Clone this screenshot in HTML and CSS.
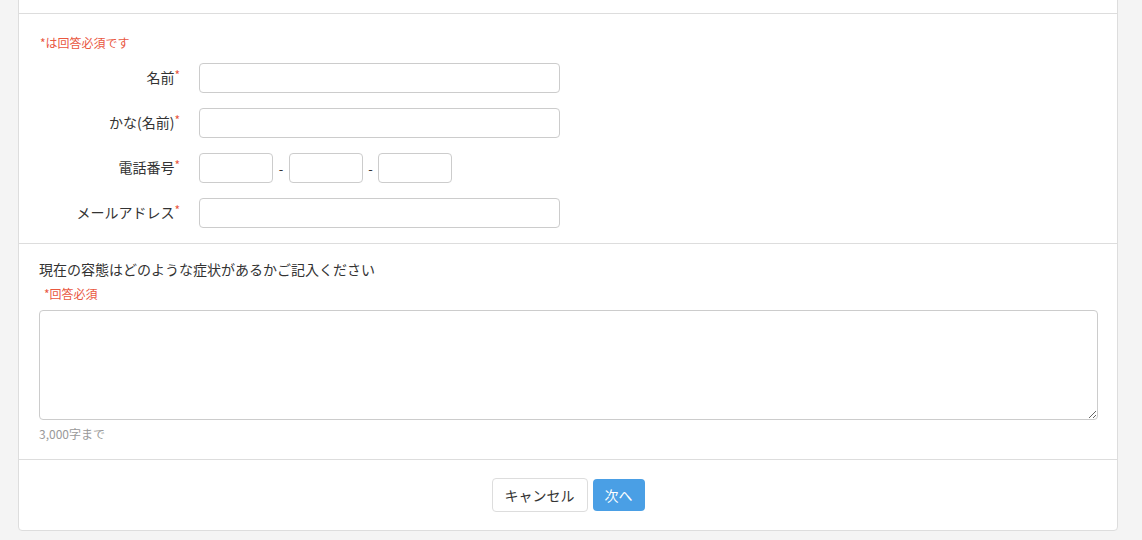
FILE: index.html
```html
<!DOCTYPE html>
<html lang="ja">

<head>
    <meta charset="UTF-8">
    <meta name="viewport" content="width=device-width, initial-scale=1.0">
    <title>お問い合わせ</title>
    <link rel="stylesheet" href="styles.css">
</head>

<body>
    <div class="card">
        <div class="card-head"></div>

        <!-- 基本情報 -->
        <div class="section info">
            <p class="note"><span class="req">*</span>は回答必須です</p>
            <div class="row">
                <label class="label">名前<span class="req">*</span></label>
                <input class="input" type="text">
            </div>
            <div class="row">
                <label class="label">かな(名前)<span class="req">*</span></label>
                <input class="input" type="text">
            </div>
            <div class="row">
                <label class="label">電話番号<span class="req">*</span></label>
                <div class="tel">
                    <input class="input short" type="text">
                    <span class="dash">-</span>
                    <input class="input short" type="text">
                    <span class="dash">-</span>
                    <input class="input short" type="text">
                </div>
            </div>
            <div class="row">
                <label class="label">メールアドレス<span class="req">*</span></label>
                <input class="input" type="email">
            </div>
        </div>

        <!-- 症状 -->
        <div class="section question">
            <p class="q-title">現在の容態はどのような症状があるかご記入ください</p>
            <p class="q-req">*回答必須</p>
            <textarea class="area" maxlength="3000"></textarea>
            <p class="limit">3,000字まで</p>
        </div>

        <div class="footer">
            <button class="btn btn-cancel">キャンセル</button>
            <button class="btn btn-next">次へ</button>
        </div>
    </div>
</body>

</html>
```

FILE: styles.css
```css
* {
    box-sizing: border-box;
}

body {
    margin: 0;
    background: #f4f4f4;
    font-family: "Noto Sans CJK JP", "Noto Sans", sans-serif;
    font-size: 14px;
    color: #333;
}

p {
    margin: 0;
}

.card {
    margin: -20px 24px 8px 18px;
    background: #fff;
    border: 1px solid #ddd;
    border-radius: 4px;
}

.card-head {
    height: 33px;
    border-bottom: 1px solid #ddd;
}

.section {
    border-bottom: 1px solid #ddd;
}

.req {
    color: #e9573f;
}

/* 基本情報 */
.info {
    padding: 20px 20px 15px 21px;
}

.info .note {
    color: #e9573f;
    font-size: 12px;
    line-height: 18px;
    margin-bottom: 11px;
}

.row {
    display: flex;
    align-items: center;
    height: 30px;
    margin-bottom: 15px;
}

.row:last-child {
    margin-bottom: 0;
}

.label {
    width: 140px;
    margin-right: 19px;
    padding-bottom: 3px;
    text-align: right;
    line-height: 20px;
}

.label .req {
    font-size: 12px;
    vertical-align: top;
    position: relative;
    top: -2px;
}

.input {
    width: 361px;
    height: 30px;
    border: 1px solid #ccc;
    border-radius: 4px;
    padding: 4px 8px;
    font: inherit;
    outline: none;
}

.tel {
    display: flex;
    align-items: center;
}

.input.short {
    width: 74px;
}

.dash {
    width: 16px;
    text-align: center;
    font-size: 13px;
}

.dash:last-of-type {
    width: 15px;
}

/* 症状 */
.question {
    padding: 16px 19px 17px 20px;
}

.q-title {
    line-height: 18px;
}

.q-req {
    color: #e9573f;
    font-size: 12px;
    line-height: 16px;
    margin: 8px 0 8px 5px;
}

.area {
    display: block;
    width: 100%;
    height: 110px;
    border: 1px solid #ccc;
    border-radius: 4px;
    resize: vertical;
    font: inherit;
    outline: none;
}

.limit {
    color: #999;
    font-size: 12px;
    line-height: 16px;
    margin-top: 6px;
}

/* ボタン */
.footer {
    display: flex;
    justify-content: center;
    align-items: center;
    gap: 5px;
    padding: 18px 0;
}

.btn {
    font: inherit;
    border-radius: 4px;
    cursor: pointer;
    line-height: 20px;
}

.btn-cancel {
    height: 34px;
    padding: 0 12px;
    background: #fff;
    color: #333;
    border: 1px solid #ddd;
}

.btn-next {
    height: 32px;
    padding: 0 12px;
    background: #4a9fe5;
    color: #fff;
    border: none;
}
```
